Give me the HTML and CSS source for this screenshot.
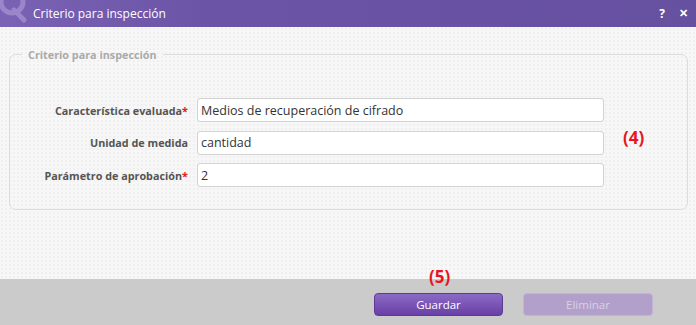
FILE: index.html
```html
<!DOCTYPE html>
<html lang="es">

<head>
    <meta charset="UTF-8">
    <meta name="viewport" content="width=device-width, initial-scale=1.0">
    <title>Criterio para inspección</title>
    <link rel="stylesheet" href="styles.css">
</head>

<body>
    <div class="dialog">
        <div class="titlebar">
            <svg class="logo" width="32" height="27" viewBox="0 0 32 27">
                <circle cx="12" cy="2" r="11" fill="none" stroke="#9b86cb" stroke-width="5"/>
                <path d="M14 10 L24 20" stroke="#9b86cb" stroke-width="5" stroke-linecap="round"/>
            </svg>
            <span class="title">Criterio para inspección</span>
            <div class="title-actions">
                <span class="help">?</span>
                <span class="close">✕</span>
            </div>
        </div>

        <div class="content">
            <fieldset class="criteria">
                <legend>Criterio para inspección</legend>
                <div class="form-grid">
                    <label>Característica evaluada<span class="req">*</span></label>
                    <input type="text" value="Medios de recuperación de cifrado">
                    <label>Unidad de medida</label>
                    <input type="text" value="cantidad">
                    <label>Parámetro de aprobación<span class="req">*</span></label>
                    <input type="text" value="2">
                </div>
                <span class="note note-4">(4)</span>
            </fieldset>
        </div>

        <div class="footer">
            <span class="note note-5">(5)</span>
            <button class="btn btn-save">Guardar</button>
            <button class="btn btn-delete" disabled>Eliminar</button>
        </div>
    </div>
</body>

</html>
```

FILE: styles.css
```css
body {
    margin: 0;
    font-family: 'Open Sans', 'Noto Sans', sans-serif;
    background: #f7f7f7;
}

.dialog {
    width: 696px;
    height: 325px;
    display: flex;
    flex-direction: column;
    overflow: hidden;
}

.titlebar {
    height: 27px;
    display: flex;
    align-items: center;
    position: relative;
    background: linear-gradient(90deg, #7a62b4 0%, #6b53a6 30%, #6650a0 100%);
    color: #fff;
}

.logo {
    position: absolute;
    left: 0;
    top: 0;
}

.title {
    margin-left: 33px;
    font-size: 12px;
    position: relative;
}

.title-actions {
    margin-left: auto;
    display: flex;
    gap: 14px;
    margin-right: 8px;
    font-weight: bold;
    font-size: 12px;
}

.close {
    font-size: 11px;
}

.content {
    flex: 1;
    padding: 20px 8px 0 9px;
    background-color: #f7f7f7;
    background-image: radial-gradient(#efefef 1px, transparent 1px);
    background-size: 4px 4px;
}

.criteria {
    margin: 0;
    padding: 0;
    border: 1px solid #dcdcdc;
    border-radius: 7px;
    position: relative;
    box-sizing: border-box;
    height: 163px;
}

.criteria legend {
    margin-left: 12px;
    padding: 0 6px;
    color: #aaa;
    font-weight: bold;
    font-size: 10.8px;
}

.form-grid {
    display: grid;
    grid-template-columns: 178px 407px;
    column-gap: 9px;
    row-gap: 8.5px;
    align-items: center;
    margin-top: 36px;
}

.form-grid label {
    text-align: right;
    font-size: 10.8px;
    font-weight: bold;
    color: #555;
}

.req {
    color: #e0201b;
}

.form-grid input {
    height: 24px;
    box-sizing: border-box;
    border: 1px solid #d2d2d2;
    border-radius: 3px;
    padding: 0 3px;
    font-family: 'Open Sans', 'Noto Sans', sans-serif;
    font-size: 12.5px;
    color: #333;
    background: #fff;
}

.note {
    position: absolute;
    color: #e5161f;
    font-weight: bold;
    font-size: 17px;
}

.note-4 {
    left: 613px;
    top: 64px;
}

.footer {
    height: 46px;
    background: #cbcbcb;
    display: flex;
    align-items: flex-start;
    padding-top: 14px;
    padding-left: 374px;
    gap: 20px;
    box-sizing: border-box;
    position: relative;
}

.note-5 {
    left: 429px;
    top: -14px;
}

.btn {
    width: 129px;
    height: 23px;
    border-radius: 4px;
    font-family: 'Open Sans', 'Noto Sans', sans-serif;
    font-size: 11.5px;
    cursor: pointer;
}

.btn-save {
    background: linear-gradient(#8a6bc5, #6a3fa6);
    border: 1px solid #5d3a96;
    color: #fff;
}

.btn-delete {
    background: #b2a0cb;
    border: 1px solid #c1b2d7;
    color: #d9d0e6;
    width: 130px;
}
```
